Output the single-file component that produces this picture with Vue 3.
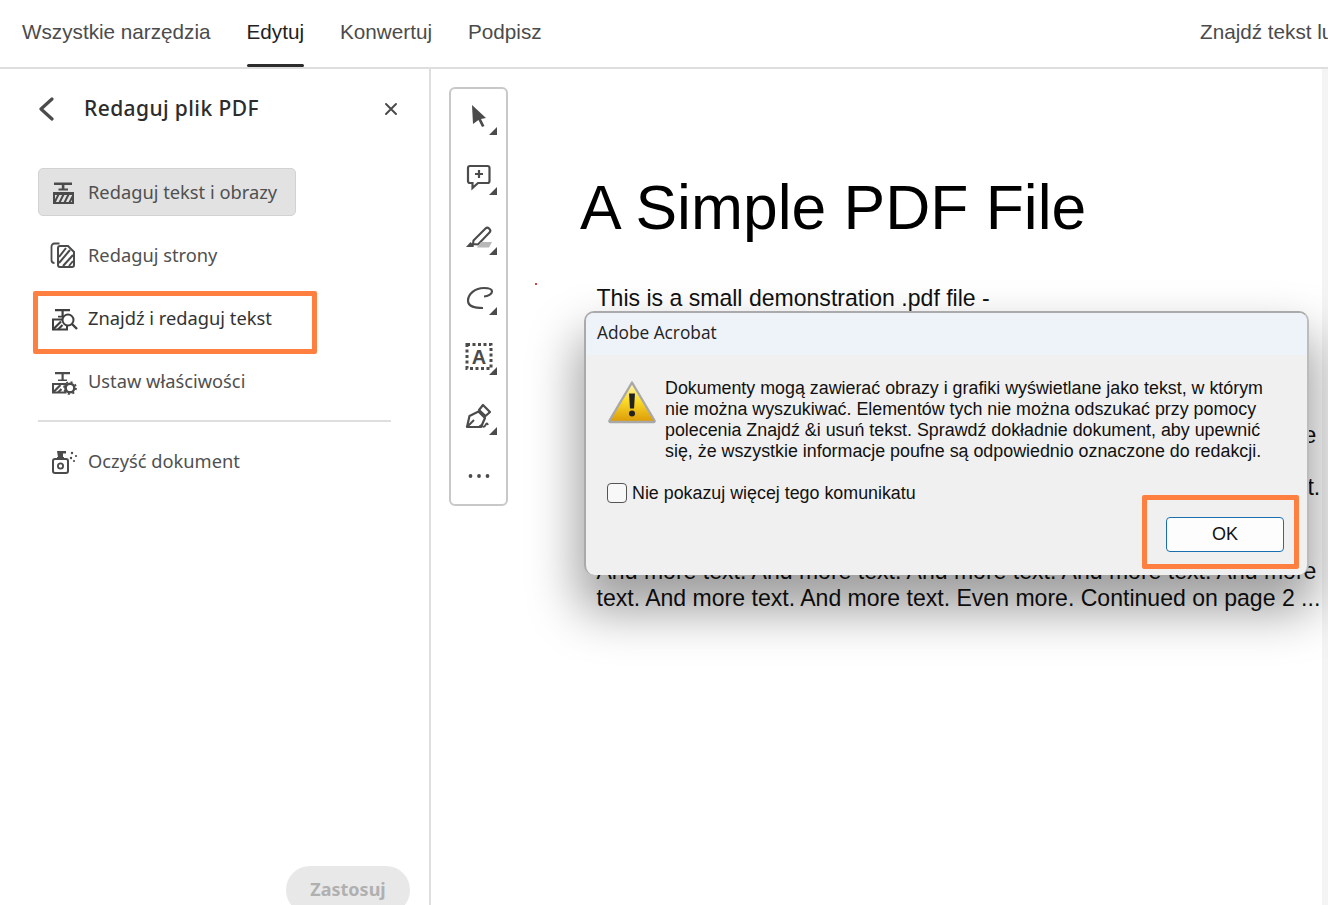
<script setup>
const tabs = [
  { label: 'Wszystkie narzędzia', active: false },
  { label: 'Edytuj', active: true },
  { label: 'Konwertuj', active: false },
  { label: 'Podpisz', active: false }
]
const paragraphs = [
  ['This is a small demonstration .pdf file -', 'just for use in the Virtual Mechanics tutorials. More text. And'],
  [
    'text. And more text. And more text. And more text. And more text.',
    'And more text. And more text. And more text. And more text.',
    'And more text. And more text. And more text. And more text. And more',
    'text. And more text. And more text. And more text. And more text.',
    'And more text. And more text. And more text. And more text. Even text.',
    'And more text. And more text. And more text. And more text.'
  ],
  [
    'And more text. And more text. And more text. And more text. And more',
    'text. And more text. And more text. Even more. Continued on page 2 ...'
  ]
]
</script>

<template>
  <div class="app">
    <header class="topbar">
      <nav class="tabs">
        <a v-for="t in tabs" :key="t.label" class="tab" :class="{ active: t.active }">{{ t.label }}</a>
      </nav>
      <span class="search">Znajdź tekst lub</span>
    </header>

    <div class="body">
      <aside class="panel">
        <div class="panel-head">
          <svg class="back" width="16" height="24" viewBox="0 0 16 24"><path d="M14 2 3 12l11 10" fill="none" stroke="#4b4b4b" stroke-width="3.2" stroke-linecap="round" stroke-linejoin="round"/></svg>
          <h2 class="panel-title">Redaguj plik PDF</h2>
          <svg class="close" width="14" height="14" viewBox="0 0 14 14"><path d="M2 2l10 10M12 2 2 12" stroke="#4b4b4b" stroke-width="2" stroke-linecap="round"/></svg>
        </div>

        <div class="list">
          <div class="item selected">
            <svg class="ico" width="26" height="26" viewBox="0 0 26 26" fill="#4b4b4b">
              <path d="M4 3.500h18v2.600H4zM11.800 6h2.600v5h-2.600zM8.500 9.600h9.500V11.500H8.500zM3 13h21v12H3z"/>
              <path d="M5 16h17v7H5z" fill="#e2e2e2"/>
              <path d="M4.500 23.500l4-8M9.500 23.500l4-8M14.500 23.500l4-8M19.500 23.500l3-6" stroke="#4b4b4b" stroke-width="2"/>
            </svg>
            <span class="item-label">Redaguj tekst i obrazy</span>
          </div>
          <div class="item">
            <svg class="ico" width="26" height="26" viewBox="0 0 26 26" fill="none" stroke="#4b4b4b" stroke-width="1.800">
              <path d="M9.500 1.500H4.500a3 3 0 0 0-3 3V18a3 3 0 0 0 3 3"/>
              <path d="M10 4h8l6 6v13a2 2 0 0 1-2 2H10a2 2 0 0 1-2-2V6a2 2 0 0 1 2-2z" stroke-width="2"/>
              <path d="M9 15l7-9M9 21l11-13M13 24l10-11M19 24l4-5" stroke-width="2"/>
            </svg>
            <span class="item-label">Redaguj strony</span>
          </div>
          <div class="item marked">
            <svg class="ico" width="26" height="26" viewBox="0 0 26 26" fill="#3f3f3f">
              <path d="M5 4h15v2.200H5zM11.500 6h2.200v6h-2.200zM8 10.800h9V12.500H8z"/>
              <rect x="3" y="14.500" width="14" height="10" fill="none" stroke="#3f3f3f" stroke-width="2"/>
              <path d="M3 24.500l8-8M8 24.500l4.500-4.500" stroke="#3f3f3f" stroke-width="2.200"/>
              <circle cx="18" cy="15" r="5.500" fill="#fff" stroke="#3f3f3f" stroke-width="2"/>
              <path d="M22 19l5 5" stroke="#3f3f3f" stroke-width="2.400"/>
            </svg>
            <span class="item-label">Znajdź i redaguj tekst</span>
          </div>
          <div class="item">
            <svg class="ico" width="26" height="26" viewBox="0 0 26 26" fill="#4b4b4b">
              <path d="M5 4h15v2.200H5zM11.500 6h2.200v7h-2.200zM8 11.500h9V13H8z"/>
              <rect x="3" y="16" width="12.500" height="8.500" fill="none" stroke="#4b4b4b" stroke-width="2"/>
              <path d="M3 24.500l7.500-7.500M8 24.500l3.500-3.500" stroke="#4b4b4b" stroke-width="2.200"/>
              <circle cx="20" cy="20" r="4.300" fill="#fff" stroke="#4b4b4b" stroke-width="2.400"/>
              <circle cx="20" cy="20" r="6" fill="none" stroke="#4b4b4b" stroke-width="1.800" stroke-dasharray="2 2.700"/>
            </svg>
            <span class="item-label">Ustaw właściwości</span>
          </div>
          <hr class="divider" />
          <div class="item">
            <svg class="ico" width="26" height="26" viewBox="0 0 26 26" fill="#4b4b4b">
              <path d="M7 3h9v2.500h-3V9H8z"/>
              <rect x="3" y="11" width="15" height="14" rx="2" fill="none" stroke="#4b4b4b" stroke-width="2"/>
              <path d="M7 9h7v3H7z"/>
              <circle cx="10.500" cy="18" r="2.600" fill="none" stroke="#4b4b4b" stroke-width="1.800"/>
              <circle cx="22" cy="5" r="1.200"/><circle cx="26" cy="8" r="1.100"/><circle cx="21" cy="10" r="1.200"/><circle cx="24" cy="13" r="1.100"/>
            </svg>
            <span class="item-label">Oczyść dokument</span>
          </div>
        </div>

        <button class="apply" disabled>Zastosuj</button>
      </aside>

      <main class="main">
        <div class="toolbar">
          <svg class="tool" viewBox="0 0 38 36">
            <path d="M12 6 26 19l-5 1 3.500 7-2.500 1-3.500-7-5.500 4z" fill="#4b4b4b"/>
            <path class="tri" d="M37 28v8h-8z"/>
          </svg>
          <svg class="tool" viewBox="0 0 38 36">
            <path d="M10 7h17.500a2 2 0 0 1 2 2v13a2 2 0 0 1-2 2H18l-5.500 5v-5H10a2 2 0 0 1-2-2V9a2 2 0 0 1 2-2z" fill="none" stroke="#4b4b4b" stroke-width="2.200"/>
            <path d="M19 11v8M15 15h8" stroke="#4b4b4b" stroke-width="2.200"/>
            <path class="tri" d="M37 28v8h-8z"/>
          </svg>
          <svg class="tool" viewBox="0 0 38 36">
            <path d="M13.500 21.500 25.500 9.500a2.500 2.500 0 0 1 3.500 0l.5.500a2.500 2.500 0 0 1 0 3.500L18 25.500l-5-.5z" fill="none" stroke="#4b4b4b" stroke-width="2.100"/>
            <path d="M6 28l4.500-5 3.500 3.500-.5 1.500z" fill="#4b4b4b"/>
            <path d="M21 23h11l-3 5.500H17z" fill="#b8b8b8"/>
            <path class="tri" d="M37 28v8h-8z"/>
          </svg>
          <svg class="tool" viewBox="0 0 38 36">
            <path d="M23 29c-8 0-15-1-15-7.500S15 9 24 9c5 0 8 1 8 3.500S28 17.500 24 17.500" fill="none" stroke="#4b4b4b" stroke-width="2.200"/>
            <path class="tri" d="M37 28v8h-8z"/>
          </svg>
          <svg class="tool" viewBox="0 0 38 36">
            <rect x="7" y="5.500" width="24" height="24" fill="none" stroke="#4b4b4b" stroke-width="3" stroke-dasharray="3 2.500"/>
            <text x="19" y="25" text-anchor="middle" class="tool-a">A</text>
            <path class="tri" d="M37 28v8h-8z"/>
          </svg>
          <svg class="tool" viewBox="0 0 38 36">
            <path d="M7 28l2.500-11 9-4.500 6.500 6.500-4 9z" fill="none" stroke="#4b4b4b" stroke-width="2.200" stroke-linejoin="round"/>
            <path d="M19 11l4-5 7 7-4.500 4z" fill="none" stroke="#4b4b4b" stroke-width="2.200" stroke-linejoin="round"/>
            <path d="M7.500 27.500 14 21" stroke="#4b4b4b" stroke-width="2"/>
            <path d="M19 28q2-3 3.500-1t3-1 2.500 0" fill="none" stroke="#4b4b4b" stroke-width="1.800"/>
            <path class="tri" d="M37 28v8h-8z"/>
          </svg>
          <svg class="tool" viewBox="0 0 38 36" fill="#4b4b4b">
            <circle cx="10.500" cy="17" r="1.900"/><circle cx="19" cy="17" r="1.900"/><circle cx="27.500" cy="17" r="1.900"/>
          </svg>
        </div>

        <article class="page">
          <h1 class="doc-title">A Simple PDF File</h1>
          <div class="doc-text">
            <p v-for="(para, i) in paragraphs" :key="i" class="para">
              <span v-for="line in para" :key="line" class="line">{{ line }}</span>
            </p>
          </div>
          <i class="speck"></i>
        </article>
        <div class="strip"></div>

        <section class="dialog">
          <div class="dialog-title">Adobe Acrobat</div>
          <div class="dialog-body">
            <div class="msg">
              <svg class="warn" width="50" height="44" viewBox="0 0 50 44">
                <defs>
                  <linearGradient id="warnFill" x1="0" y1="0" x2="0" y2="1">
                    <stop offset="0" stop-color="#fdf6c0"/>
                    <stop offset="0.450" stop-color="#fbdc28"/>
                    <stop offset="1" stop-color="#dc9a08"/>
                  </linearGradient>
                </defs>
                <path d="M25 2.500 47.500 40.500a1 1 0 0 1-1 1.500H3.500a1 1 0 0 1-1-1.500z" fill="url(#warnFill)" stroke="#a8a8a8" stroke-width="2.400" stroke-linejoin="round"/>
                <path d="M22 13.500h6l-1 15h-4z" fill="#222"/>
                <circle cx="25" cy="33.500" r="3" fill="#222"/>
              </svg>
              <p class="msg-text">
                <span class="line">Dokumenty mogą zawierać obrazy i grafiki wyświetlane jako tekst, w którym</span>
                <span class="line">nie można wyszukiwać. Elementów tych nie można odszukać przy pomocy</span>
                <span class="line">polecenia Znajdź &amp;i usuń tekst. Sprawdź dokładnie dokument, aby upewnić</span>
                <span class="line">się, że wszystkie informacje poufne są odpowiednio oznaczone do redakcji.</span>
              </p>
            </div>
            <label class="check"><span class="box"></span>Nie pokazuj więcej tego komunikatu</label>
            <div class="actions">
              <button class="ok">OK</button>
            </div>
          </div>
        </section>
      </main>
    </div>
  </div>
</template>

<style scoped>
.app {
  width: 1328px;
  height: 905px;
  overflow: hidden;
  display: flex;
  flex-direction: column;
  background: #fff;
  font-family: "Liberation Sans", Arial, sans-serif;
}
.topbar {
  height: 69px;
  box-sizing: border-box;
  flex: none;
  border-bottom: 2px solid #dedede;
  display: flex;
  white-space: nowrap;
  overflow: hidden;
}
.tabs {
  flex: none;
  width: 1178px;
  display: flex;
  gap: 36px;
  padding-left: 22px;
}
.tab {
  position: relative;
  font-size: 20.7px;
  line-height: 64px;
  color: #4b4b4b;
}
.tab.active {
  color: #222;
}
.tab.active::after {
  content: "";
  position: absolute;
  left: 0;
  right: 0;
  top: 64px;
  height: 3px;
  border-radius: 2px;
  background: #2c2c2c;
}
.search {
  flex: none;
  font-size: 20.7px;
  line-height: 63px;
  color: #4b4b4b;
}
.body {
  flex: 1;
  display: flex;
  min-height: 0;
}
.panel {
  width: 431px;
  box-sizing: border-box;
  flex: none;
  border-right: 2px solid #dedede;
  display: flex;
  flex-direction: column;
  overflow: hidden;
  font-family: "Noto Sans", Lato, sans-serif;
}
.panel-head {
  height: 80px;
  flex: none;
  display: flex;
  align-items: center;
  padding: 0 31px 0 38px;
  margin-bottom: 19px;
}
.back {
  margin-right: 30px;
}
.panel-title {
  margin: 0 0 2px;
  font-size: 21px;
  font-weight: 500;
  color: #2c2c2c;
  letter-spacing: 0.4px;
}
.close {
  margin-left: auto;
}
.list {
  display: flex;
  flex-direction: column;
  gap: 15px;
  margin: 0 38px;
}
.item {
  position: relative;
  width: 258px;
  height: 48px;
  box-sizing: border-box;
  border: 1px solid transparent;
  border-radius: 5px;
  display: flex;
  align-items: center;
  gap: 12px;
  padding-left: 11px;
  font-size: 18.3px;
  color: #505050;
}
.item-label {
  margin-bottom: 2px;
}
.item.selected {
  background: #e2e2e2;
  border-color: #d2d2d2;
}
.item.marked {
  color: #333;
}
.item.marked::after {
  content: "";
  position: absolute;
  left: -6px;
  right: -22px;
  top: -4px;
  bottom: -13px;
  border: 5px solid #ff7f41;
  border-radius: 2px;
}
.ico {
  flex: none;
  overflow: visible;
}
.divider {
  width: 100%;
  height: 2px;
  margin: 0;
  border: 0;
  background: #dedede;
}
.apply {
  align-self: flex-end;
  flex: none;
  width: 124px;
  height: 48px;
  margin: auto 19px -9px 0;
  padding: 0 0 2px;
  border: 0;
  border-radius: 24px;
  background: #e8e8e8;
  color: #b0b0b0;
  font: 700 18px "Noto Sans", Lato, sans-serif;
}
.main {
  position: relative;
  flex: 1;
  display: flex;
  min-width: 0;
}
.toolbar {
  flex: none;
  align-self: flex-start;
  width: 59px;
  box-sizing: border-box;
  margin: 18px 0 0 18px;
  padding: 10px 0 9px 9px;
  border: 2px solid #c8c8c8;
  border-radius: 6px;
  display: flex;
  flex-direction: column;
  gap: 24px;
}
.tool {
  width: 38px;
  height: 36px;
  display: block;
  overflow: visible;
}
.tri {
  fill: #4b4b4b;
}
.tool-a {
  font: 700 20px "Liberation Sans", sans-serif;
  fill: #4b4b4b;
}
.page {
  position: relative;
  flex: 1;
  min-width: 0;
  padding: 104px 0 0 72px;
  color: #111;
  white-space: nowrap;
}
.doc-title {
  margin: 0 0 42px;
  font-size: 62.4px;
  line-height: 70px;
  font-weight: 400;
  color: #000;
}
.doc-text {
  margin-left: 16.5px;
}
.para {
  margin: 0 0 31.5px;
  font-size: 23.05px;
  line-height: 26.3px;
}
.line {
  display: block;
}
.speck {
  position: absolute;
  left: 27px;
  top: 214px;
  width: 2px;
  height: 2px;
  background: #d04040;
}
.strip {
  flex: none;
  width: 6px;
  background: #f4f4f4;
}
.dialog {
  position: absolute;
  left: 153px;
  top: 242px;
  width: 725px;
  height: 264px;
  box-sizing: border-box;
  border: 2px solid #aaa;
  border-bottom: 0;
  border-right-color: #bcbcbc;
  border-radius: 10px;
  background: #f0f0f0;
  box-shadow: 0 30px 50px 6px rgba(0, 0, 0, 0.38);
  overflow: hidden;
}
.dialog-title {
  height: 42px;
  padding-left: 11px;
  background: #eef2f9;
  font: 17.3px/40px "Open Sans", sans-serif;
  color: #222;
}
.dialog-body {
  padding: 23px 23px 0 21px;
  color: #111;
}
.msg {
  display: flex;
  gap: 8px;
}
.warn {
  flex: none;
  margin-top: 2px;
}
.msg-text {
  margin: 0;
  font-size: 17.85px;
  line-height: 21px;
  white-space: nowrap;
}
.check {
  display: flex;
  align-items: center;
  gap: 5px;
  margin-top: 21px;
  height: 20px;
  font-size: 17.85px;
}
.box {
  width: 20px;
  height: 20px;
  box-sizing: border-box;
  border: 1.5px solid #555;
  border-radius: 4px;
  background: #f8f8f8;
}
.actions {
  display: flex;
  justify-content: flex-end;
  margin-top: 14px;
}
.ok {
  position: relative;
  width: 118px;
  height: 35px;
  box-sizing: border-box;
  border: 1.5px solid #1a6fb0;
  border-radius: 4px;
  background: #fdfdfd;
  color: #111;
  font: 18px "Liberation Sans", sans-serif;
}
.ok::after {
  content: "";
  position: absolute;
  left: -25.5px;
  right: -15.5px;
  top: -23.5px;
  bottom: -17.5px;
  border: 5px solid #ff7f41;
  border-radius: 2px;
}
</style>
